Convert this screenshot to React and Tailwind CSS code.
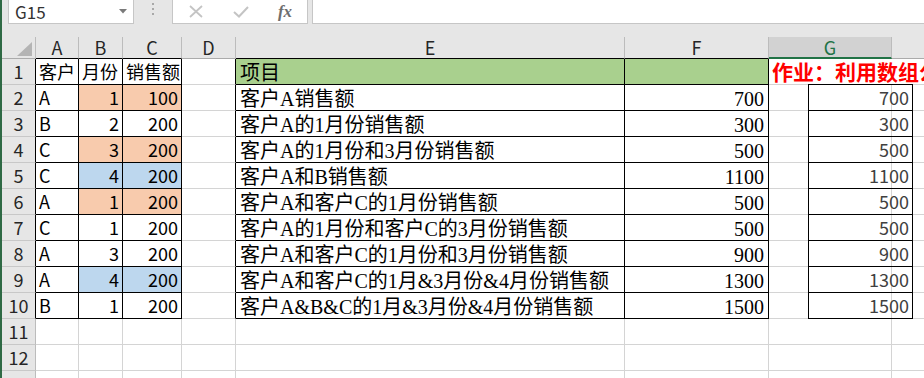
import React from "react";

const COLS = [
  { k: "A", w: "w-[43px]" },
  { k: "B", w: "w-[44px]" },
  { k: "C", w: "w-[59px]" },
  { k: "D", w: "w-[54px]" },
  { k: "E", w: "w-[389px]" },
  { k: "F", w: "w-[144px]" },
  { k: "G", w: "w-[123px]" },
  { k: "H", w: "w-[200px]" },
];

const A = ["客户", "A", "B", "C", "C", "A", "C", "A", "A", "B"];
const B = ["月份", "1", "2", "3", "4", "1", "1", "3", "4", "1"];
const C = ["销售额", "100", "200", "200", "200", "200", "200", "200", "200", "200"];
const E = [
  "项目",
  "客户A销售额",
  "客户A的1月份销售额",
  "客户A的1月份和3月份销售额",
  "客户A和B销售额",
  "客户A和客户C的1月份销售额",
  "客户A的1月份和客户C的3月份销售额",
  "客户A和客户C的1月份和3月份销售额",
  "客户A和客户C的1月&3月份&4月份销售额",
  "客户A&B&C的1月&3月份&4月份销售额",
];
const F = ["", "700", "300", "500", "1100", "500", "500", "900", "1300", "1500"];
const G = ["700", "300", "500", "1100", "500", "500", "900", "1300", "1500"];

const PEACH = [2, 4, 6];
const BLUE = [5, 9];

function Cell({ r, k, w }) {
  const inTable = r >= 1 && r <= 10 && ["A", "B", "C", "E", "F"].includes(k);
  let br = "border-r-[#d4d4d4]";
  let bb = "border-b-[#d4d4d4]";
  if (inTable) {
    br = "border-r-black";
    bb = "border-b-black";
  }
  if (k === "D" && r >= 1 && r <= 10) br = "border-r-black";
  if (k === "G" && r === 1) br = "border-r-white";

  let bg = "";
  if (r === 1 && (k === "E" || k === "F")) bg = "bg-[#a9d08e]";
  if ((k === "B" || k === "C") && PEACH.includes(r)) bg = "bg-[#f8cbad]";
  if ((k === "B" || k === "C") && BLUE.includes(r)) bg = "bg-[#bdd7ee]";

  let content = null;
  const i = r - 1;
  if (r >= 1 && r <= 10) {
    if (k === "A") {
      content = <span className="pl-[3px] text-[18px] leading-[25px] text-black">{A[i]}</span>;
    } else if (k === "B" || k === "C") {
      const v = k === "B" ? B[i] : C[i];
      content =
        r === 1 ? (
          <span className="pl-[3px] text-[18px] leading-[25px] text-black">{v}</span>
        ) : (
          <span className="ml-auto pr-[3px] text-[18px] leading-[25px] text-black">{v}</span>
        );
    } else if (k === "E") {
      content = (
        <span className="pl-[4px] font-['Liberation_Serif','Noto_Sans_CJK_SC',serif] text-[20px] leading-[29px] text-black whitespace-nowrap">
          {E[i]}
        </span>
      );
    } else if (k === "F") {
      content = (
        <span className="ml-auto pr-[4px] font-['Liberation_Serif','Noto_Sans_CJK_SC',serif] text-[20px] leading-[29px] text-black">
          {F[i]}
        </span>
      );
    } else if (k === "G" && r === 1) {
      content = (
        <span className="relative z-10 pl-[3px] text-[21px] font-bold leading-[25px] text-[#ff0000] whitespace-nowrap">
          作业：利用数组公式完成
        </span>
      );
    }
  }

  return (
    <div className={`${w} ${bg} ${br} ${bb} h-[26px] shrink-0 border-r border-b flex items-start`}>
      {content}
    </div>
  );
}

function FormulaBar() {
  return (
    <div className="h-[37px] shrink-0 bg-[#e6e6e6] flex items-start">
      <div className="ml-[6px] w-[126px] h-[24px] bg-white border-x border-b border-[#c6c6c6] flex items-center justify-between pl-[6px] pr-[6px]">
        <span className="text-[17px] leading-none text-[#333]">G15</span>
        <svg width="8" height="5" viewBox="0 0 8 5">
          <path d="M0 0H8L4 4.5Z" fill="#7a7a7a" />
        </svg>
      </div>
      <div className="w-[38px] h-[24px] flex flex-col items-center pt-[3px] gap-[3px]">
        <div className="w-[2px] h-[2px] bg-[#a8a8a8]" />
        <div className="w-[2px] h-[2px] bg-[#a8a8a8]" />
        <div className="w-[2px] h-[2px] bg-[#a8a8a8]" />
      </div>
      <div className="w-[136px] h-[24px] bg-white border-x border-b border-[#c6c6c6] flex items-center">
        <div className="w-[46px] flex justify-center">
          <svg width="14" height="13" viewBox="0 0 14 13">
            <path d="M1 1L13 12M13 1L1 12" stroke="#c4c4c4" strokeWidth="1.8" fill="none" />
          </svg>
        </div>
        <div className="w-[44px] flex justify-center">
          <svg width="16" height="12" viewBox="0 0 16 12">
            <path d="M1 6L6 10.5L15 1" stroke="#c4c4c4" strokeWidth="2" fill="none" />
          </svg>
        </div>
        <div className="w-[44px] flex justify-center">
          <span className="font-['Liberation_Serif',serif] italic font-bold text-[17px] leading-none text-[#6e6e6e]">
            fx
          </span>
        </div>
      </div>
      <div className="ml-[4px] flex-1 h-[24px] bg-white border-l border-b border-[#c6c6c6]" />
    </div>
  );
}

function HeaderRow() {
  return (
    <div className="flex h-[22px] shrink-0">
      <div className="w-[34px] h-[22px] shrink-0 bg-[#e6e6e6] border-r border-b border-r-[#bcbcbc] border-b-[#ababab] flex items-end justify-end pr-[3px] pb-[2px]">
        <svg width="15" height="14" viewBox="0 0 15 14">
          <path d="M15 0V14H0Z" fill="#b4b4b4" />
        </svg>
      </div>
      {COLS.map(({ k, w }) => {
        const isG = k === "G";
        const tableTop = ["A", "B", "C", "E", "F"].includes(k);
        const cls = isG
          ? "bg-[#d2d2d2] border-b-2 border-b-[#217346] text-[#217346]"
          : tableTop
          ? "bg-[#e6e6e6] border-b border-b-black text-[#262626]"
          : "bg-[#e6e6e6] border-b border-b-[#ababab] text-[#262626]";
        return (
          <div
            key={k}
            className={`${w} ${cls} h-[22px] shrink-0 border-r border-r-[#bcbcbc] flex justify-center items-start text-[18px] leading-[21px]`}
          >
            {k}
          </div>
        );
      })}
    </div>
  );
}

function DataRow({ r }) {
  const black = r >= 1 && r <= 10;
  return (
    <div className="flex h-[26px] shrink-0">
      <div
        className={`w-[34px] h-[26px] shrink-0 bg-[#e6e6e6] border-r border-b border-b-[#c8c8c8] ${
          black ? "border-r-black" : "border-r-[#bcbcbc]"
        } flex justify-center items-start text-[18px] leading-[25px] text-[#262626]`}
      >
        {r}
      </div>
      {COLS.map(({ k, w }) => (
        <Cell key={k} r={r} k={k} w={w} />
      ))}
    </div>
  );
}

function GBox() {
  return (
    <div className="absolute left-[806px] top-[84px] w-[105px] border-x border-t border-black">
      {G.map((v, i) => (
        <div key={i} className="h-[26px] border-b border-black flex justify-end items-start pr-[3px]">
          <span className="text-[18px] leading-[25px] text-[#404040]">{v}</span>
        </div>
      ))}
    </div>
  );
}

export default function App() {
  const rows = [1, 2, 3, 4, 5, 6, 7, 8, 9, 10, 11, 12, 13];
  return (
    <div className="w-[924px] h-[378px] overflow-hidden bg-white flex font-['Noto_Sans_CJK_SC',sans-serif]">
      <div className="w-[2px] shrink-0 bg-[#2f6a45]" />
      <div className="flex-1 min-w-0 flex flex-col relative overflow-hidden">
        <FormulaBar />
        <HeaderRow />
        {rows.map((r) => (
          <DataRow key={r} r={r} />
        ))}
        <GBox />
      </div>
    </div>
  );
}
